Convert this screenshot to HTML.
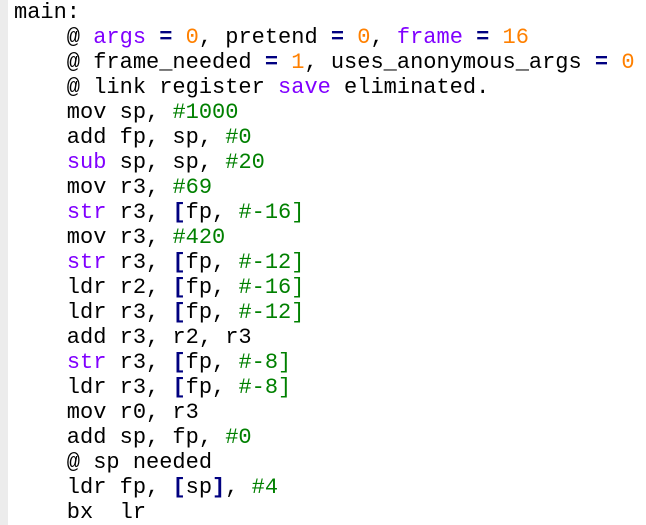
<!DOCTYPE html>
<html><head><style>
html,body{margin:0;padding:0;background:#fff;width:646px;height:525px;overflow:hidden}
.strip{position:absolute;left:0;top:0;width:8px;height:525px;background:#ececec}
pre{position:absolute;left:14px;top:0;margin:0;font-family:"Liberation Mono","Courier New",monospace;font-size:22px;line-height:25px;color:#000}
.p{color:#8000ff}.o{color:#ff8000}.g{color:#008000}.b{color:#000080;font-weight:bold}
</style></head><body><div class="strip"></div>
<pre>main:
    @ <span class="p">args</span> <span class="b">=</span> <span class="o">0</span>, pretend <span class="b">=</span> <span class="o">0</span>, <span class="p">frame</span> <span class="b">=</span> <span class="o">16</span>
    @ frame_needed <span class="b">=</span> <span class="o">1</span>, uses_anonymous_args <span class="b">=</span> <span class="o">0</span>
    @ link register <span class="p">save</span> eliminated.
    mov sp, <span class="g">#1000</span>
    add fp, sp, <span class="g">#0</span>
    <span class="p">sub</span> sp, sp, <span class="g">#20</span>
    mov r3, <span class="g">#69</span>
    <span class="p">str</span> r3, <span class="b">[</span>fp, <span class="g">#-16]</span>
    mov r3, <span class="g">#420</span>
    <span class="p">str</span> r3, <span class="b">[</span>fp, <span class="g">#-12]</span>
    ldr r2, <span class="b">[</span>fp, <span class="g">#-16]</span>
    ldr r3, <span class="b">[</span>fp, <span class="g">#-12]</span>
    add r3, r2, r3
    <span class="p">str</span> r3, <span class="b">[</span>fp, <span class="g">#-8]</span>
    ldr r3, <span class="b">[</span>fp, <span class="g">#-8]</span>
    mov r0, r3
    add sp, fp, <span class="g">#0</span>
    @ sp needed
    ldr fp, <span class="b">[</span>sp<span class="b">]</span>, <span class="g">#4</span>
    bx  lr
</pre></body></html>
